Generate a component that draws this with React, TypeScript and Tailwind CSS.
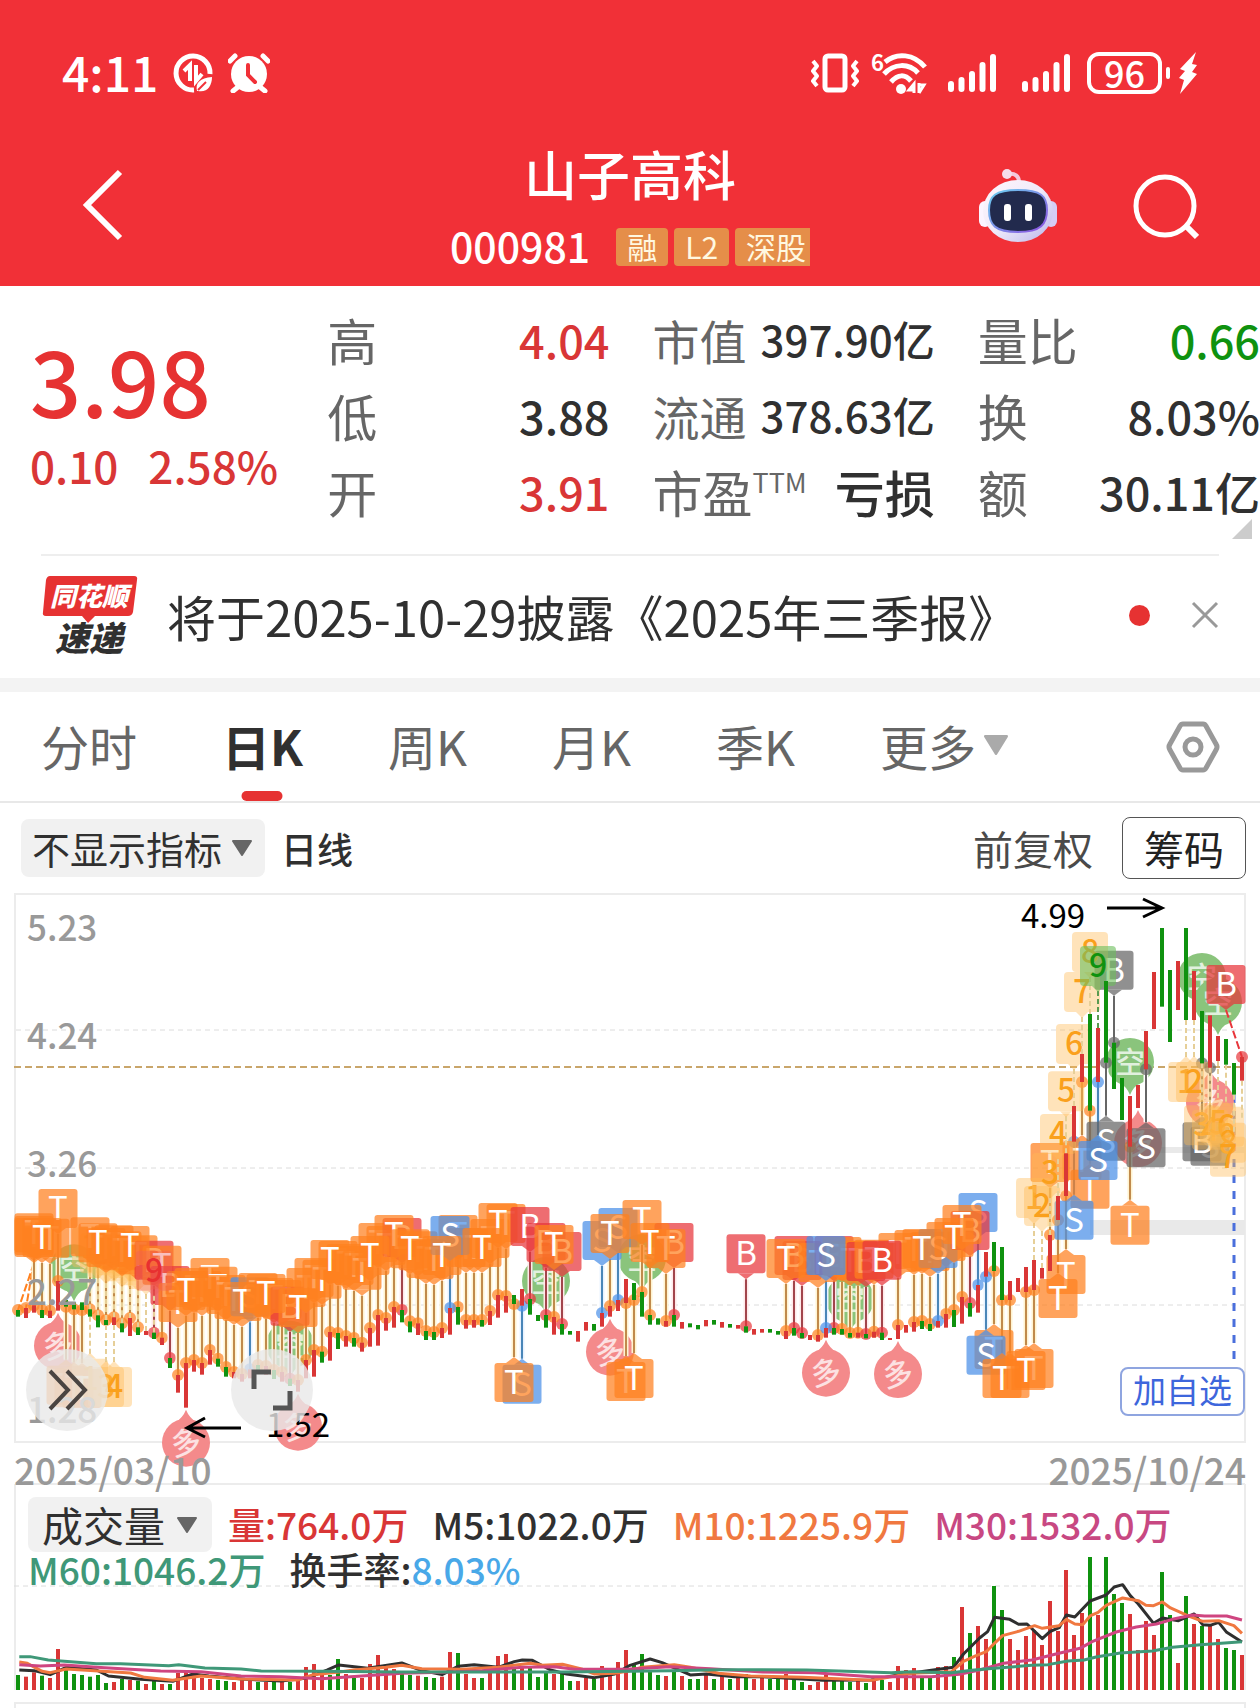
import React from "react";

const RED = "#d93636";
const GREEN = "#0f920f";

/* One entry per trading day: colour, high and low, in thirds of a chart pixel. */
const DAYS =
  "g1260-1280 r1254-1284 r1246-1268 g1260-1284 r1262-1284 r1173-1262 g1230-1250 g1237-1258 g1237-1260 g1258-1280 " +
  "g1276-1312 g1290-1305 r1282-1305 g1300-1327 r1284-1338 g1312-1335 r1323-1335 g1328-1347 r1343-1365 g1404-1434 " +
  "r1455-1508 r1419-1553 r1410-1445 r1419-1454 r1380-1424 g1406-1430 g1431-1460 r1446-1465 r1452-1475 r1438-1465 " +
  "g1425-1450 r1428-1455 g1440-1467 r1446-1475 g1466-1488 r1470-1505 r1410-1465 r1380-1460 g1385-1418 r1326-1412 " +
  "g1329-1377 r1338-1370 g1344-1370 r1358-1385 r1314-1370 r1275-1367 r1284-1322 r1251-1313 g1260-1297 g1294-1327 " +
  "r1300-1335 g1323-1350 g1326-1350 r1314-1344 r1254-1334 g1251-1304 r1290-1316 r1290-1313 g1290-1310 r1263-1305 " +
  "r1215-1283 r1218-1268 g1215-1242 r1197-1247 g1227-1274 g1275-1293 g1275-1313 r1281-1334 g1302-1334 g1323-1334 " +
  "r1323-1355 r1296-1322 g1302-1322 r1269-1310 r1248-1280 r1230-1263 r1167-1239 g1179-1230 g1206-1280 g1275-1304 " +
  "g1285-1304 r1293-1310 g1275-1310 r1296-1316 g1300-1312 g1305-1318 r1290-1309 g1290-1304 r1296-1313 g1302-1313 " +
  "r1305-1316 g1309-1328 r1317-1334 r1317-1328 g1317-1328 g1323-1334 r1323-1347 g1314-1337 g1329-1345 r1335-1350 " +
  "r1335-1355 r1314-1343 g1314-1334 g1317-1334 g1329-1343 r1328-1343 g1332-1345 r1325-1343 g1328-1350 r1344-1350 " +
  "r1305-1347 r1305-1328 r1296-1325 g1293-1317 g1302-1323 r1293-1313 r1272-1313 g1260-1311 r1221-1301 g1239-1280 " +
  "r1185-1268 r1086-1160 g1056-1143 g1071-1230 r1173-1230 r1164-1206 r1131-1206 r1110-1200 r1134-1166 r1035-1143 " +
  "r918-990 r790-918 r648-755 r492-576 g372-662 r414-576 g273-518 g458-597 g564-690 r618-770 " +
  "r585-654 r423-538 r246-417 g114-350 g240-456 r213-360 g114-390 r243-390 g363-520 r376-533 " +
  "r438-513 g447-524 g519-614 r501-572";

const candles = DAYS.split(" ").map((d, i) => {
  const [hi, lo] = d.slice(1).split("-").map((v) => Number(v) / 3);
  return { x: 18 + 8 * i, hi, lo, color: d[0] === "r" ? RED : GREEN };
});

/* Trade marks: "T" both ways, "B" buy, "S" sell; "^" hangs the mark under the candle. */
const BACK_MARKS =
  "0T 1T 2T 4T 5T 6T^ 7T^ 8T^ 9T 11T 12T 13T 15T 17B 18T 19B 20T 22T 23T 24T 25T 26T 27T 29S 30T 32T 33T 34B 36T 37T 38T " +
  "40T 41T 42T 43T 45T 46T 48B 47T 50T 51T 52T 55T 56T 57T 59T 61T 60T 63S^ 64B 66B 68B 73S 75S 76T^ 78T 82B 81T " +
  "91B 98B 97B 100T 102B 103T 104T 105T 106B 107T 110T 112T 114T 116T 115S 120S 119B 118T 122T^ 121S^ 124T^ 127T^ " +
  "129T 131T^ 133T^ 134T^ 132S^ 136S^g 137B^vg 139T^ 141S^g 149S^g";
const FRONT_MARKS =
  "3T 10T 14T 21T 28T 31T 35T 39T 44T 49T 54S 53T 58T 62T^ 67T 74T 79T 77T^ 96T 101S 108B 113T 117T 123T^ 126T^ 130T^ 135S^ 148B^g 153B";

const INK: Record<string, { fill: string; stem: string; halo: string }> = {
  T: { fill: "#ff811f", stem: "#c08a4c", halo: "#fff3d0" },
  B: { fill: "#e8363b", stem: "#a2454c", halo: "#ffe9e9" },
  S: { fill: "#4a90e8", stem: "#4a86b8", halo: "#e8f2ff" },
  G: { fill: "#666666", stem: "#666666", halo: "#ffffff" },
};

function readMark(code: string) {
  const parts = /^(\d+)([TBS])(\^?)(v?)(g?)$/.exec(code)!;
  const c = candles[Number(parts[1])];
  const below = parts[3] === "^" && parts[4] !== "v";
  return {
    key: code,
    letter: parts[2],
    ink: INK[parts[5] ? "G" : parts[2]],
    below,
    x: c.x,
    cx: Math.min(Math.max(c.x, 34), 1226),
    dot: below ? c.lo : c.hi,
    top: below ? c.lo + 59 : c.hi - 92,
  };
}

type MarkData = ReturnType<typeof readMark>;
const backMarks = BACK_MARKS.split(" ").map(readMark);
const frontMarks = FRONT_MARKS.split(" ").map(readMark);

/* Nine-count labels: day, digit, side. */
type CountData = [number, string, "up" | "down"];
const EARLY_COUNTS: CountData[] = [
  [9, "1", "up"], [10, "2", "up"], [11, "3", "up"], [12, "4", "up"], [13, "5", "up"], [14, "6", "up"],
  [15, "7", "up"], [16, "8", "up"], [17, "9", "up"],
  [9, "1", "down"], [11, "3", "down"], [12, "4", "down"],
];
const LATE_COUNTS: CountData[] = [
  [127, "1", "up"], [128, "2", "up"], [129, "3", "up"], [130, "4", "up"], [131, "5", "up"], [132, "6", "up"],
  [133, "7", "up"], [134, "8", "up"], [135, "9", "up"],
  [146, "1", "down"], [147, "2", "down"], [148, "3", "down"], [149, "4", "down"], [150, "5", "down"],
  [151, "6", "down"], [153, "8", "down"], [152, "7", "down"],
];

const SHORT_PINS = [7, 34, 66, 78, 104, 139, 148, 150];
const LONG_PINS = [5, 21, 35, 74, 101, 110, 140, 149];

function Stem({ m }: { m: MarkData }) {
  const end = m.below ? m.top - 6 : m.top + 45;
  const leaning = m.cx !== m.x;
  return (
    <g>
      {!leaning && <path d={`M${m.x} ${end}V${m.dot}`} stroke={m.ink.halo} strokeWidth="5" />}
      <path
        d={`M${m.cx} ${end}L${m.x} ${m.dot}`}
        stroke={leaning ? m.ink.fill : m.ink.stem}
        strokeWidth="2"
        strokeDasharray={leaning ? "8 3" : undefined}
      />
      <circle cx={m.x} cy={m.dot} r="6" fill={m.ink.fill} opacity="0.7" />
    </g>
  );
}

function Mark({ m }: { m: MarkData }) {
  const tip = m.below
    ? `M${m.cx - 8} ${m.top}l8 -6l8 6z`
    : `M${m.cx - 8} ${m.top + 39}l8 6l8 -6z`;
  return (
    <g>
      <g fill={m.ink.fill} opacity="0.72">
        <rect x={m.cx - 19.5} y={m.top} width="39" height="39" rx="3" />
        <path d={tip} />
      </g>
      <text x={m.cx} y={m.top + 31} textAnchor="middle" fontSize="33" fill="#fff">
        {m.letter}
      </text>
    </g>
  );
}

function Pin({ day, kind }: { day: number; kind: "long" | "short" }) {
  const c = candles[day];
  const long = kind === "long";
  const y = long ? c.lo + 35 : c.hi - 34;
  const tip = long
    ? `M${c.x - 12} ${y - 19}Q${c.x - 3} ${y - 25} ${c.x} ${y - 33}Q${c.x + 3} ${y - 25} ${c.x + 12} ${y - 19}z`
    : `M${c.x - 12} ${y + 19}Q${c.x - 3} ${y + 25} ${c.x} ${y + 33}Q${c.x + 3} ${y + 25} ${c.x + 12} ${y + 19}z`;
  return (
    <g>
      <g fill={long ? "#f48a8b" : "#8ac47c"}>
        <circle cx={c.x} cy={y} r="24" />
        <path d={tip} />
      </g>
      <text
        x={c.x}
        y={y + 11}
        textAnchor="middle"
        fontSize="30"
        fontWeight="500"
        fill="#fff"
        opacity="0.75"
        transform={long ? `rotate(-12 ${c.x} ${y})` : undefined}
      >
        {long ? "多" : "空"}
      </text>
    </g>
  );
}

function Count({ data: [day, digit, side] }: { data: CountData }) {
  const c = candles[day];
  const cx = Math.min(c.x, 1228);
  const up = side === "up";
  const top = up ? c.hi - 82 : c.lo + 42;
  const green = day === 135;
  const red = day === 17;
  const fill = green ? "#6cbf5c" : red ? "#f0605a" : "#ffbb55";
  return (
    <g>
      <path
        d={up ? `M${c.x} ${top + 45}V${c.hi}` : `M${c.x} ${top - 5}V${c.lo}`}
        stroke={green ? "#5a9a50" : "#e6cf98"}
        strokeWidth="2"
        strokeDasharray="5 3"
      />
      <g fill={fill} opacity={green ? 0.6 : 0.4}>
        <rect x={cx - 18} y={top} width="36" height="40" rx="4" />
        <path d={up ? `M${cx - 6} ${top + 40}l6 6l6 -6z` : `M${cx - 6} ${top}l6 -6l6 6z`} />
      </g>
      <text x={cx} y={top + 31} textAnchor="middle" fontSize="32" fontWeight="500" fill={green ? GREEN : red ? "#e83030" : "#faa01c"}>
        {digit}
      </text>
    </g>
  );
}

function PriceChart() {
  return (
    <svg viewBox="0 0 1260 594" className="block h-auto w-full overflow-visible" role="img" aria-label="日K线图">
      <g fill="none" stroke="#ececec" strokeWidth="2">
        <rect x="15" y="4" width="1230" height="548" />
        <path d="M15 594H1245" />
      </g>
      <g stroke="#dcdcdc" strokeDasharray="5 4">
        <path d="M16 140H1244M16 278H1244M16 415H1244" />
      </g>
      <path d="M1090 330H1245V345H1090zM1150 257H1245V263H1150z" fill="#e9e9e9" />
      <path d="M14 177H1245" stroke="#c9a66b" strokeWidth="2" strokeDasharray="7 4" />
      <path d="M1234 205V480" stroke="#4a6fdc" strokeWidth="3" strokeDasharray="8 8" />

      {SHORT_PINS.map((d) => <Pin key={d} day={d} kind="short" />)}
      {LONG_PINS.map((d) => <Pin key={d} day={d} kind="long" />)}
      {backMarks.concat(frontMarks).map((m) => <Stem key={m.key} m={m} />)}
      {EARLY_COUNTS.slice(0, 8).map((c) => <Count key={c[0] + c[2]} data={c} />)}
      {backMarks.map((m) => <Mark key={m.key} m={m} />)}
      {frontMarks.map((m) => <Mark key={m.key} m={m} />)}
      {EARLY_COUNTS.slice(8).map((c) => <Count key={c[0] + c[2]} data={c} />)}
      {LATE_COUNTS.map((c) => <Count key={c[0] + c[2]} data={c} />)}
      {candles.map((c) => <rect key={c.x} x={c.x - 2} y={c.hi} width="4" height={c.lo - c.hi} fill={c.color} />)}

      <g fill="#999" fontSize="35" fontWeight="500">
        <text x="27" y="51">5.23</text>
        <text x="27" y="159">4.24</text>
        <text x="27" y="287">3.26</text>
        <text x="27" y="415">2.27</text>
        <text x="27" y="533">1.28</text>
      </g>
      <g fill="#999" fontSize="37" fontWeight="500">
        <text x="14" y="595">2025/03/10</text>
        <text x="1246" y="595" textAnchor="end">2025/10/24</text>
      </g>
      <g fill="#000" fontSize="33">
        <text x="1021" y="38">4.99</text>
        <text x="266" y="547">1.52</text>
      </g>
      <g fill="none" stroke="#000" strokeWidth="3">
        <path d="M1107 18H1161M1143 9L1162 18L1143 27" />
        <path d="M241 538H188M205 528L187 538L205 547" />
      </g>
    </svg>
  );
}

/* One entry per trading day: colour and top edge of the bar; the baseline is 630. */
const VOLUMES =
  "g585 r590 r577 g587 r594 r507 g570 g582 g585 g590 g585 g609 r606 g597 r600 g602 r612 g603 r612 g612 r579 r570 r585 r594 r597 g600 g603 " +
  "r606 r600 r603 g606 r606 g603 r604 g606 r600 r561 r552 r580 g585 g537 r582 g594 r594 r552 r525 r564 r567 g582 g585 r587 g591 g594 r590 " +
  "r516 g519 r582 r594 g594 r555 r528 r522 g564 r560 g564 g591 g579 r582 g582 g603 r603 r594 g597 r558 r576 r546 r510 g555 g522 g570 g585 " +
  "r588 g576 r588 g597 g597 r582 g597 r588 g597 r591 g582 r597 r590 g597 g594 r582 g597 g606 r615 r606 r585 g597 g600 g606 r597 g609 r598 " +
  "g600 r606 r558 r570 r564 g590 g594 r561 r558 g531 r381 g459 r438 r477 g318 g390 r477 r510 r468 r450 r495 r363 r453 r270 r465 r399 g231 " +
  "r405 g231 g342 g369 r402 r510 r423 r465 g276 g405 r549 g348 r432 g438 r438 r477 g504 g510 r525";

const AVERAGES = [
  {
    color: "#2f2f2f",
    points:
      "48,570 85,572 125,584 165,562 240,570 270,588 350,598 430,604 480,582 520,588 610,598 700,603 760,595 815,570 843,555 915,565 1000,549 1050,572 1100,584 1140,559 1180,554 1240,562 1280,545 1300,540 1325,541 1370,570 1410,582 1480,593 1530,582 1568,556 1618,537 1648,548 1718,585 1758,582 1828,590 1898,590 2048,601 2168,600 2238,584 2318,571 2373,562 2398,522 2438,474 2458,455 2475,412 2513,418 2535,433 2556,432 2594,476 2613,455 2636,443 2654,405 2675,411 2713,363 2753,345 2773,321 2794,314 2813,347 2833,372 2871,430 2893,414 2933,422 2972,402 2993,434 3012,436 3033,427 3053,457 3091,486",
  },
  {
    color: "#f07840",
    points:
      "48,546 68,550 105,574 125,578 165,567 235,572 325,579 360,592 430,601 500,588 600,597 740,600 780,584 850,575 880,570 960,562 1000,556 1050,566 1150,568 1240,562 1320,550 1350,556 1400,553 1450,568 1480,582 1530,580 1568,572 1598,562 1678,554 1718,562 1788,580 1868,588 1998,592 2168,601 2268,580 2368,575 2398,544 2428,528 2456,514 2475,490 2495,467 2535,454 2575,437 2594,445 2636,437 2654,418 2675,432 2695,434 2713,408 2733,397 2753,376 2794,354 2833,362 2852,376 2871,377 2893,366 2913,384 2952,405 2993,424 3033,422 3071,437 3091,460",
  },
  {
    color: "#cf4580",
    points:
      "48,554 100,558 160,555 260,563 400,573 500,575 600,588 700,590 800,596 900,588 1000,580 1100,577 1200,572 1300,562 1380,560 1430,568 1520,568 1568,567 1668,560 1768,566 1898,576 2028,578 2168,590 2318,590 2388,583 2438,570 2498,550 2568,540 2628,522 2688,505 2718,485 2778,456 2828,441 2878,432 2918,418 2968,405 2998,408 3053,408 3091,420",
  },
  {
    color: "#3f9878",
    points:
      "48,530 75,530 120,540 240,551 300,551 420,557 445,554 510,564 600,567 650,573 800,574 1000,576 1200,576 1400,576 1568,574 1668,572 1788,569 2008,570 2088,573 2218,578 2268,575 2368,578 2418,571 2475,565 2568,556 2608,554 2658,543 2698,540 2728,531 2788,519 2868,513 2918,502 2988,494 3091,485",
  },
];

function VolumeChart() {
  return (
    <svg viewBox="0 4 1260 224" className="block h-auto w-full" role="img" aria-label="成交量图">
      <path d="M15 4V210M1245 4V210M15 228V223H1245V228" fill="none" stroke="#ececec" strokeWidth="2" />
      <path d="M14 106H1244" stroke="#dcdcdc" strokeDasharray="5 4" />
      {VOLUMES.split(" ").map((v, i) => {
        const top = Number(v.slice(1)) / 3;
        return <rect key={i} x={16 + 8 * i} y={top} width="4" height={210 - top} fill={v[0] === "r" ? RED : GREEN} />;
      })}
      <g transform="scale(0.4018 0.3333)" fill="none" strokeWidth="3" strokeLinejoin="round">
        {AVERAGES.map((a) => (
          <polyline key={a.color} points={a.points} stroke={a.color} vectorEffect="non-scaling-stroke" />
        ))}
      </g>
    </svg>
  );
}

function Signal() {
  return (
    <svg viewBox="0 0 50 40" className="h-10 w-[50px]" stroke="#fff" strokeWidth="6" strokeLinecap="round" aria-hidden="true">
      <path d="M4 31V36M14.500 27V36M25 21V36M35.500 12V36M46 4V36" />
    </svg>
  );
}

function StatusBar() {
  return (
    <div className="flex h-[146px] items-center justify-between pl-[62px] pr-[62px] text-white">
      <div className="flex items-center gap-[15px]">
        <span className="pb-1 text-[48px] font-medium leading-none">4:11</span>
        <svg viewBox="0 0 40 40" className="h-10 w-10" fill="none" stroke="#fff" aria-hidden="true">
          <path d="M21 37A17 17 0 1 1 37 21" strokeWidth="5" />
          <path d="M17 28V12L11 18M23 12V28L29 21" strokeWidth="4" />
          <path d="M24 38C22 30 27 25 39 24C39 33 34 40 25 38z" fill="#fff" stroke="none" />
          <path d="M25 37L33 29" stroke="#f13037" strokeWidth="2" />
        </svg>
        <svg viewBox="0 0 42 40" className="h-10 w-[42px]" fill="none" stroke="#fff" strokeLinecap="round" aria-hidden="true">
          <circle cx="21" cy="21" r="18" fill="#fff" stroke="none" />
          <path d="M2 8L7 3M40 8L35 3M10 34L5 38M32 34L37 38" strokeWidth="5" />
          <path d="M20 12V22L27 29" stroke="#f13037" strokeWidth="4" />
        </svg>
      </div>
      <div className="flex items-center">
        <svg viewBox="0 0 48 40" className="h-10 w-12" fill="none" stroke="#fff" strokeWidth="4" strokeLinejoin="round" aria-hidden="true">
          <rect x="14" y="3" width="20" height="34" rx="3" strokeWidth="5" />
          <path d="M2 8L6 13L2 18L6 23L2 28L6 33M46 8L42 13L46 18L42 23L46 28L42 33" strokeWidth="4" />
        </svg>
        <svg viewBox="0 0 56 42" className="ml-3 h-[42px] w-14 overflow-visible" fill="none" stroke="#fff" strokeWidth="5" aria-hidden="true">
          <text x="0" y="19" fontSize="22" fontWeight="700" fill="#fff" stroke="none">6</text>
          <path d="M14 10C26 0 43 2 54 15M13 22C23 11 38 11 47 21M20 30C27 22 34 22 40 29" />
          <circle cx="30" cy="37" r="5" fill="#fff" stroke="none" />
          <path d="M43 41V32L38 38H43M48 31V41M48 41L53 33H47" strokeWidth="3" />
        </svg>
        <div className="ml-[20px] flex gap-6">
          <Signal />
          <Signal />
        </div>
        <div className="ml-[16px] flex h-[42px] w-[75px] items-center justify-center rounded-[12px] border-4 border-white pb-0.5 text-[36px] font-medium leading-none">
          96
        </div>
        <div className="ml-1 h-3 w-1 rounded-sm bg-white" />
        <svg viewBox="0 0 20 42" className="ml-2 h-[42px] w-5" fill="#fff" aria-hidden="true">
          <path d="M18 0L2 17L7 19L1 26L6 28L2 42L19 22L14 20L19 13L14 12z" />
        </svg>
      </div>
    </div>
  );
}

function Robot() {
  return (
    <svg viewBox="0 0 78 74" className="h-[74px] w-[78px]" aria-hidden="true">
      <defs>
        <linearGradient id="shell" x1="0" y1="0" x2="1" y2="1">
          <stop offset="0" stopColor="#fff6fb" />
          <stop offset="0.5" stopColor="#f0eafa" />
          <stop offset="1" stopColor="#b9b5ea" />
        </linearGradient>
        <linearGradient id="rim" x1="0" y1="0" x2="1" y2="1">
          <stop offset="0" stopColor="#6ad0f0" />
          <stop offset="1" stopColor="#8d4fe0" />
        </linearGradient>
      </defs>
      <path d="M29 6C36 5 40 8 40 14" fill="none" stroke="#f3c9dc" strokeWidth="4" />
      <circle cx="28" cy="6" r="5" fill="#f6dcea" />
      <rect x="0" y="33" width="12" height="26" rx="6" fill="#fbf4ff" />
      <rect x="66" y="33" width="12" height="26" rx="6" fill="#d5cdf5" />
      <ellipse cx="39" cy="43" rx="35" ry="31" fill="url(#shell)" />
      <path d="M10 42C10 28 16 22 39 22S68 28 68 42S62 64 39 64S10 57 10 42z" fill="#222a4d" stroke="url(#rim)" strokeWidth="2" />
      <rect x="25" y="36" width="7" height="17" rx="3" fill="#fff" />
      <rect x="46" y="36" width="7" height="17" rx="3" fill="#fff" />
    </svg>
  );
}

function Header() {
  return (
    <header className="bg-[#f13037]">
      <StatusBar />
      <div className="grid h-[140px] grid-cols-[1fr_auto_1fr] text-white">
        <button aria-label="返回" className="ml-[80px] mt-[23px] h-[72px] w-[46px]">
          <svg viewBox="0 0 46 72" fill="none" stroke="#fff" strokeWidth="6" aria-hidden="true">
            <path d="M40 3L7 36L40 69" />
          </svg>
        </button>
        <div className="flex flex-col items-center">
          <h1 className="text-[53px] font-medium leading-[54px]">山子高科</h1>
          <div className="mt-[28px] flex h-[38px] items-center">
            <span className="mr-[26px] pb-1 text-[41px] font-medium leading-none">000981</span>
            <div className="flex gap-1.5 text-[30px] leading-[36px] text-[#fff8e0]">
              <span className="h-[38px] rounded bg-[#e58e49] px-[11px]">融</span>
              <span className="h-[38px] rounded bg-[#e58e49] px-[11px]">L2</span>
              <span className="h-[38px] rounded-l bg-[#e58e49] pl-[11px] pr-1">深股</span>
            </div>
          </div>
        </div>
        <div className="mr-[61px] flex justify-end gap-[76px]">
          <button aria-label="智能助手" className="mt-[22px] h-[74px]">
            <Robot />
          </button>
          <button aria-label="搜索" className="mt-[28px] h-[66px] w-[66px]">
            <svg viewBox="0 0 66 66" fill="none" stroke="#fff" strokeWidth="5" aria-hidden="true">
              <circle cx="32" cy="32" r="29" />
              <path d="M52 51L64 63" strokeWidth="6" />
            </svg>
          </button>
        </div>
      </div>
    </header>
  );
}

function Stat({ label, sup, value, tone, size }: { label: string; sup?: string; value: string; tone?: string; size?: string }) {
  return (
    <div className="flex h-[76px] items-center justify-between whitespace-nowrap leading-none">
      <dt className="flex text-[#666]">
        {label}
        {sup && <span className="mt-[2px] text-[27px]">{sup}</span>}
      </dt>
      <dd className={"font-medium " + (size ?? "text-[45px]") + " " + (tone ?? "text-[#303030]")}>{value}</dd>
    </div>
  );
}

function Quote() {
  return (
    <section className="relative grid h-[268px] grid-cols-[254fr_282fr_282fr_282fr] gap-x-[43px] pl-[30px] pt-[15px]">
      <div className="whitespace-nowrap">
        <div className="mt-[26px] text-[90px] font-medium leading-[104px] text-[#e63232]">3.98</div>
        <div className="flex gap-[30px] text-[44px] font-medium leading-[68px] text-[#d93636]">
          <span>0.10</span>
          <span>2.58%</span>
        </div>
      </div>
      <dl className="text-[50px]">
        <Stat label="高" value="4.04" tone="text-[#d93636]" />
        <Stat label="低" value="3.88" />
        <Stat label="开" value="3.91" tone="text-[#d93636]" />
      </dl>
      <dl className="text-[47px]">
        <Stat label="市值" value="397.90亿" size="text-[42px]" />
        <Stat label="流通" value="378.63亿" size="text-[42px]" />
        <div className="text-[50px]">
          <Stat label="市盈" sup="TTM" value="亏损" size="text-[50px]" />
        </div>
      </dl>
      <dl className="text-[50px]">
        <Stat label="量比" value="0.66" tone="text-[#0f920f]" />
        <Stat label="换" value="8.03%" />
        <Stat label="额" value="30.11亿" />
      </dl>
      <svg viewBox="0 0 20 20" className="absolute bottom-[15px] right-[8px] h-5 w-5" fill="#ccc" aria-hidden="true">
        <path d="M20 0V20H0z" />
      </svg>
    </section>
  );
}

function News() {
  return (
    <section className="mx-[41px] flex h-[124px] items-center border-t-2 border-[#eee] pb-1">
      <svg viewBox="0 0 98 80" className="h-20 w-[98px] shrink-0 overflow-visible" role="img" aria-label="同花顺速递">
        <path d="M9 1H93Q97 1 96 5L92 37Q91 41 87 41H54L47 48L41 41H5Q1 41 2 37L5 5Q6 1 9 1z" fill="#e63232" />
        <text x="48" y="31" textAnchor="middle" fontSize="26" fontWeight="900" fontStyle="italic" fill="#fff">同花顺</text>
        <text x="48" y="76" textAnchor="middle" fontSize="34" fontWeight="900" fontStyle="italic" fill="#303030">速递</text>
      </svg>
      <a href="#report" className="ml-[28px] whitespace-nowrap text-[49px] leading-none text-[#303030]">
        将于2025-10-29披露《2025年三季报》
      </a>
      <span className="ml-auto h-[21px] w-[21px] rounded-full bg-[#e63232]" />
      <button aria-label="关闭" className="ml-[41px] h-7 w-7">
        <svg viewBox="0 0 28 28" fill="none" stroke="#999" strokeWidth="3" aria-hidden="true">
          <path d="M2 2L26 26M26 2L2 26" />
        </svg>
      </button>
    </section>
  );
}

function Caret({ className }: { className: string }) {
  return (
    <svg viewBox="0 0 20 16" className={className} fill="currentColor" stroke="currentColor" strokeWidth="2" strokeLinejoin="round" preserveAspectRatio="none" aria-hidden="true">
      <path d="M1 1H19L10 15z" />
    </svg>
  );
}

function Tabs() {
  return (
    <nav className="flex h-[111px] items-center gap-[85px] whitespace-nowrap border-b-2 border-[#e8e8e8] pl-[41px] pr-[40px] text-[48px] leading-none text-[#666]">
      <button className="pb-1">分时</button>
      <button className="relative flex h-full items-center pb-1 font-bold text-[#303030]">
        日K
        <span className="absolute bottom-0 left-1/2 h-2.5 w-[41px] -translate-x-1/2 rounded-full bg-[#e63232]" />
      </button>
      <button className="pb-1">周K</button>
      <button className="pb-1">月K</button>
      <button className="pb-1">季K</button>
      <button className="flex items-center gap-2 pb-1">
        更多
        <Caret className="h-5 w-6 text-[#aaa]" />
      </button>
      <button aria-label="设置" className="ml-auto h-[52px] w-[54px]">
        <svg viewBox="0 0 54 52" fill="none" stroke="#999" strokeWidth="5" strokeLinejoin="round" aria-hidden="true">
          <path d="M17 3H37Q39 3 40 5L50 23Q52 26 50 29L40 47Q39 49 37 49H17Q15 49 14 47L4 29Q2 26 4 23L14 5Q15 3 17 3z" />
          <circle cx="27" cy="26" r="8" />
        </svg>
      </button>
    </nav>
  );
}

function Toolbar() {
  return (
    <div className="flex h-[87px] items-center whitespace-nowrap pl-[21px] pr-[14px] pt-0.5 leading-none">
      <button className="flex h-[58px] items-center gap-2.5 rounded-lg bg-[#f1f1f1] pl-[11px] pr-[13px] text-[38px] text-[#303030]">
        不显示指标
        <Caret className="h-4 w-5 text-[#666]" />
      </button>
      <span className="ml-4 text-[36px] font-medium text-[#303030]">日线</span>
      <button className="ml-auto text-[40px] text-[#4a4a4a]">前复权</button>
      <button className="ml-[29px] h-[62px] rounded-lg border border-[#555] px-[21px] text-[40px] text-[#222]">筹码</button>
    </div>
  );
}

export default function App() {
  return (
    <main
      lang="zh-CN"
      className="w-full overflow-x-hidden bg-white font-['Noto_Sans_CJK_SC',sans-serif]"
    >
      <Header />
      <Quote />
      <News />
      <div className="h-[14px] bg-[#f3f3f3]" />
      <Tabs />
      <Toolbar />
      <section className="relative">
        <PriceChart />
        <button aria-label="展开" className="absolute bottom-[53px] left-[26px] flex h-[82px] w-[82px] items-center justify-center rounded-full bg-[#e8e8e8]/80">
          <svg viewBox="0 0 42 42" className="h-[42px] w-[42px]" fill="none" stroke="#4a4441" strokeWidth="4" aria-hidden="true">
            <path d="M4 2L22 21L4 40M21 2L39 21L21 40" />
          </svg>
        </button>
        <button aria-label="全屏" className="absolute bottom-[53px] left-[231px] flex h-[82px] w-[82px] items-center justify-center rounded-full bg-[#e8e8e8]/80">
          <svg viewBox="0 0 44 44" className="h-11 w-11" fill="none" stroke="#555" strokeWidth="5" aria-hidden="true">
            <path d="M4 21V4H21M40 23V40H23" />
          </svg>
        </button>
        <button className="absolute bottom-[68px] right-[15px] h-[49px] rounded-lg border-2 border-[#8fa5e0] bg-white px-[11px] pb-1 text-[33px] leading-none text-[#3d66dc]">
          加自选
        </button>
      </section>
      <section className="grid">
        <div className="[grid-area:1/1]">
          <VolumeChart />
        </div>
        <div className="z-10 flex flex-col whitespace-nowrap pl-[28px] pt-[13px] text-[37px] font-medium leading-none [grid-area:1/1]">
          <div className="flex h-[55px] items-center gap-6">
            <button className="-mr-2 flex h-full items-center gap-3 rounded-lg bg-[#f1f1f1] pl-[14px] pr-[15px] text-[41px] font-normal text-[#303030]">
              成交量
              <Caret className="h-4 w-5 text-[#666]" />
            </button>
            <span className="text-[#d93636]">量:764.0万</span>
            <span className="text-[#303030]">M5:1022.0万</span>
            <span className="text-[#f07840]">M10:1225.9万</span>
            <span className="text-[#c84882]">M30:1532.0万</span>
          </div>
          <div className="flex h-[34px] items-center gap-6">
            <span className="text-[#3f9878]">M60:1046.2万</span>
            <span className="text-[#303030]">
              换手率:<span className="text-[#49a8e8]">8.03%</span>
            </span>
          </div>
        </div>
      </section>
    </main>
  );
}
